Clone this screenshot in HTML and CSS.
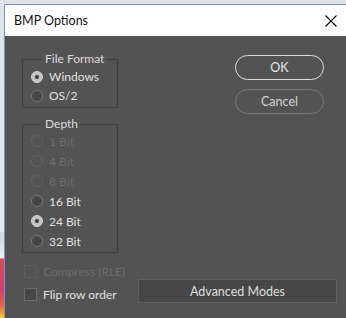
FILE: index.html
```html
<!DOCTYPE html>
<html>

<head>
    <link rel="stylesheet" href="styles.css">
</head>

<body>

    <div class="dialog">
        <div class="title-bar">
            <span class="title">BMP Options</span>
            <svg class="close" width="12" height="12" viewBox="0 0 12 12">
                <path d="M0.5 0.5 L11.5 11.5 M11.5 0.5 L0.5 11.5" stroke="#000" stroke-width="1.1" fill="none" />
            </svg>
        </div>

        <div class="dialog-body">
            <div class="left-col">
                <fieldset class="group group-format">
                    <legend>File Format</legend>
                    <label class="opt"><span class="radio checked"></span>Windows</label>
                    <label class="opt"><span class="radio"></span>OS/2</label>
                </fieldset>

                <fieldset class="group group-depth">
                    <legend>Depth</legend>
                    <label class="opt disabled"><span class="radio"></span>1 Bit</label>
                    <label class="opt disabled"><span class="radio"></span>4 Bit</label>
                    <label class="opt disabled"><span class="radio"></span>8 Bit</label>
                    <label class="opt"><span class="radio"></span>16 Bit</label>
                    <label class="opt"><span class="radio checked"></span>24 Bit</label>
                    <label class="opt"><span class="radio"></span>32 Bit</label>
                </fieldset>

                <div class="checks">
                    <label class="check disabled"><span class="box"></span>Compress (RLE)</label>
                    <label class="check"><span class="box"></span>Flip row order</label>
                </div>
            </div>

            <div class="right-col">
                <button class="pill pill-ok">OK</button>
                <button class="pill pill-cancel">Cancel</button>
                <button class="advanced">Advanced Modes</button>
            </div>
        </div>
    </div>

</body>

</html>
```

FILE: styles.css
```css
body {
    margin: 0;
    width: 346px;
    height: 318px;
    overflow: hidden;
    font-family: Lato, "Open Sans", sans-serif;
    background: linear-gradient(to bottom,
            #dfe2e6 0, #e6e7e9 232px,
            #d6d6d6 233px, #eeeeee 258px,
            #d84a62 259px, #c8416f 290px, #de6a4a 306px, #f0cf2a 318px);
}

.dialog {
    margin: 4px 0 0 4px;
    border-top: 1px solid #6f97bf;
    border-left: 1px solid #6f97bf;
    height: 320px;
    background-color: #535353;
}

.title-bar {
    height: 31px;
    background: white;
    display: flex;
    align-items: center;
    justify-content: space-between;
    padding: 0 9px;
}

.title {
    font-size: 12.5px;
    color: #111;
}

.close {
    margin-top: 1px;
}

.dialog-body {
    display: flex;
    padding: 16px 9px 0 17px;
}

.left-col {
    width: 96px;
    display: flex;
    flex-direction: column;
}

.group {
    margin: 0;
    padding: 0 0 2px 8px;
    border: 1px solid #3e3e3e;
    min-width: 0;
}

.group legend {
    margin-left: 11px;
    padding: 0 3px;
    font-size: 12px;
    line-height: 14px;
    color: #dcdcdc;
}

.group-depth {
    margin-top: 9px;
    padding-bottom: 1px;
}

.opt {
    display: flex;
    align-items: center;
    height: 19px;
    font-size: 12px;
    color: #e0e0e0;
    white-space: nowrap;
}

.group-format .opt:first-of-type {
    margin-top: 1px;
}

.group-depth .opt {
    height: 20px;
}

.radio {
    flex: none;
    width: 10px;
    height: 10px;
    border-radius: 50%;
    border: 1px solid #787878;
    background: #454545;
    margin-right: 6px;
    box-sizing: content-box;
    display: flex;
    align-items: center;
    justify-content: center;
}

.radio.checked {
    background: #c2c2c2;
    border-color: #d6d6d6;
}

.radio.checked::after {
    content: "";
    width: 4px;
    height: 4px;
    border-radius: 50%;
    background: #3c3c3c;
}

.opt.disabled {
    color: #6e6e6e;
}

.opt.disabled .radio {
    background: transparent;
    border-color: #636363;
}

.checks {
    margin-top: 7px;
}

.check {
    display: flex;
    align-items: center;
    height: 23px;
    font-size: 12px;
    color: #e0e0e0;
    padding-left: 2px;
    white-space: nowrap;
}

.box {
    flex: none;
    width: 11px;
    height: 11px;
    border: 1px solid #6c6c6c;
    background: #474747;
    margin-right: 6px;
}

.check.disabled {
    color: #6e6e6e;
}

.check.disabled .box {
    background: transparent;
    border-color: #5e5e5e;
}

.right-col {
    margin-left: 20px;
    width: 199px;
    display: flex;
    flex-direction: column;
}

button {
    font-family: Lato, "Open Sans", sans-serif;
    cursor: pointer;
    padding: 0;
}

.pill {
    align-self: flex-end;
    margin-right: 13px;
    width: 89px;
    height: 25px;
    border-radius: 13px;
    background: transparent;
    font-size: 12.5px;
}

.pill-ok {
    margin-top: 3px;
    border: 1.5px solid #dedede;
    color: #e6e6e6;
}

.pill-cancel {
    margin-top: 9px;
    border: 1px solid #7a7a7a;
    color: #d4d4d4;
}

.advanced {
    margin-top: auto;
    margin-bottom: 3px;
    height: 24px;
    background: #474747;
    border: 1px solid #606060;
    color: #dedede;
    font-size: 12.5px;
}
```
